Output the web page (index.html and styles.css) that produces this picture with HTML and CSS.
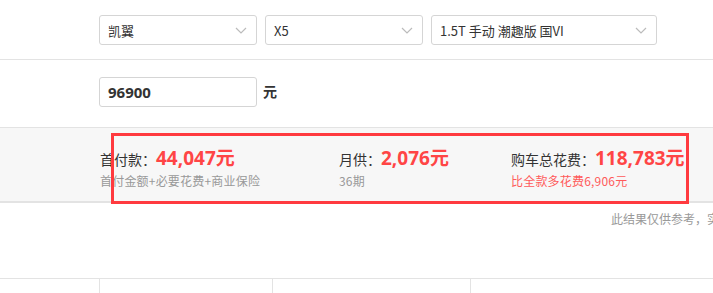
FILE: index.html
```html
<!DOCTYPE html>
<html lang="zh">
<head>
<meta charset="utf-8">
<link rel="stylesheet" href="styles.css">
</head>
<body>
<div class="page">
  <div class="row row-car">
    <div class="select w1"><span>凯翼</span><svg class="chev" viewBox="0 0 12 7" width="12" height="7"><path d="M1 1l5 5 5-5" fill="none" stroke="#bbb" stroke-width="1.2"/></svg></div>
    <div class="select w1"><span>X5</span><svg class="chev" viewBox="0 0 12 7" width="12" height="7"><path d="M1 1l5 5 5-5" fill="none" stroke="#bbb" stroke-width="1.2"/></svg></div>
    <div class="select w2"><span>1.5T 手动 潮趣版 国VI</span><svg class="chev" viewBox="0 0 12 7" width="12" height="7"><path d="M1 1l5 5 5-5" fill="none" stroke="#bbb" stroke-width="1.2"/></svg></div>
  </div>
  <div class="row row-price">
    <div class="input">96900</div><span class="unit">元</span>
  </div>
  <div class="band">
    <div class="col">
      <div class="line1"><span class="lbl">首付款：</span><span class="val">44,047元</span></div>
      <div class="line2">首付金额+必要花费+商业保险</div>
    </div>
    <div class="col">
      <div class="line1"><span class="lbl">月供：</span><span class="val">2,076元</span></div>
      <div class="line2">36期</div>
    </div>
    <div class="col">
      <div class="line1"><span class="lbl">购车总花费：</span><span class="val">118,783元</span></div>
      <div class="line2 red">比全款多花费6,906元</div>
    </div>
    <div class="highlight"></div>
  </div>
  <div class="note">此结果仅供参考，实际购车费用以当地为准</div>
  <div class="table-row">
    <div class="cell c1"></div>
    <div class="cell c2"></div>
    <div class="cell c3"></div>
    <div class="cell c4"></div>
  </div>
</div>
</body>
</html>
```
FILE: styles.css
```css
html, body {
  margin: 0;
  padding: 0;
  background: #fff;
  overflow: hidden;
}
body {
  font-family: "Noto Sans CJK SC", "Noto Sans", sans-serif;
  color: #333;
  width: 713px;
  height: 293px;
}
.page {
  width: 713px;
}
.row-car {
  display: flex;
  gap: 8px;
  padding: 15px 0 0 99px;
  height: 44px;
  border-bottom: 1px solid #e3e3e3;
}
.select {
  box-sizing: border-box;
  height: 30px;
  border: 1px solid #d5d5d5;
  border-radius: 3px;
  display: flex;
  align-items: center;
  justify-content: space-between;
  padding: 0 9px 0 8px;
  font-size: 13px;
  color: #333;
}
.select span {
  line-height: 1;
}
.w1 { width: 158px; }
.w2 { width: 226px; }
.chev { display: block; }
.row-price {
  display: flex;
  align-items: flex-start;
  padding: 17px 0 0 99px;
  height: 50px;
}
.input {
  box-sizing: border-box;
  width: 158px;
  height: 30px;
  border: 1px solid #d5d5d5;
  border-radius: 3px;
  padding: 0 8px;
  display: flex;
  align-items: center;
  font-family: "Noto Sans", "Noto Sans CJK SC", sans-serif;
  font-weight: bold;
  font-size: 15px;
  color: #333;
}
.unit {
  margin-left: 6px;
  line-height: 28px;
  font-size: 14px;
  font-weight: bold;
  color: #333;
}
.band {
  position: relative;
  display: grid;
  grid-template-columns: 239px 172px auto;
  box-sizing: border-box;
  height: 76px;
  padding: 15px 0 0 100px;
  background: #f7f7f7;
  border-top: 1px solid #e3e3e3;
  border-bottom: 2px solid #e3e3e3;
}
.line1 {
  display: flex;
  align-items: baseline;
  height: 29px;
}
.lbl {
  font-size: 14px;
  color: #333;
}
.val {
  font-family: "Noto Sans", "Noto Sans CJK SC", sans-serif;
  font-weight: bold;
  font-size: 19px;
  color: #ff4545;
}
.line2 {
  font-size: 12px;
  letter-spacing: 0.2px;
  color: #999;
}
.line2.red {
  color: #ff5a5a;
}
.highlight {
  position: absolute;
  left: 111px;
  top: 5px;
  width: 578px;
  height: 71px;
  box-sizing: border-box;
  border: 3px solid #ff3a3f;
}
.note {
  padding: 7px 0 0 611px;
  height: 75px;
  box-sizing: border-box;
  font-size: 12px;
  color: #999;
  white-space: nowrap;
  overflow: hidden;
}
.table-row {
  display: flex;
  border-top: 1px solid #e3e3e3;
  height: 20px;
}
.cell {
  border-left: 1px solid #e3e3e3;
  height: 20px;
}
.c1 { width: 99px; border-left: none; }
.c2 { width: 172px; }
.c3 { width: 197px; }
.c4 { flex: 1; }
```
